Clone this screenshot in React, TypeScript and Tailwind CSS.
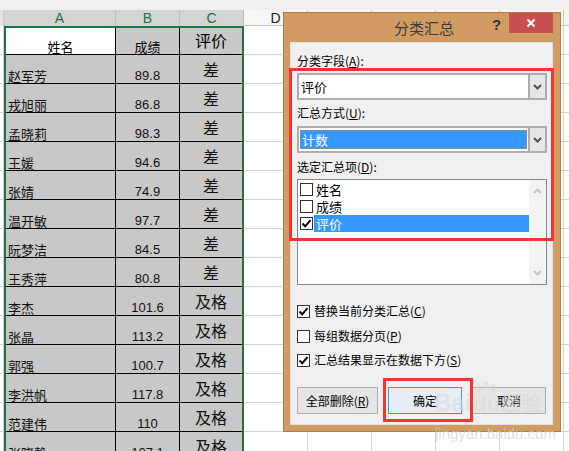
import React from "react";

const data: [string, string, string][] = [
  ["赵军芳", "89.8", "差"],
  ["戎旭丽", "86.8", "差"],
  ["孟晓莉", "98.3", "差"],
  ["王媛", "94.6", "差"],
  ["张婧", "74.9", "差"],
  ["温开敏", "97.7", "差"],
  ["阮梦洁", "84.5", "差"],
  ["王秀萍", "80.8", "差"],
  ["李杰", "101.6", "及格"],
  ["张晶", "113.2", "及格"],
  ["郭强", "100.7", "及格"],
  ["李洪帆", "117.8", "及格"],
  ["范建伟", "110", "及格"],
  ["张晓静", "107.1", "及格"],
];

const rightCols = ["D", "E", "F", "G", "H", "I"];

function CheckMark() {
  return (
    <svg width="11" height="11" viewBox="0 0 11 11" className="block">
      <path d="M1.5 5.5 L4.2 8.3 L9.5 2.2" fill="none" stroke="#000" strokeWidth="2" />
    </svg>
  );
}

function Box({ checked }: { checked?: boolean }) {
  return (
    <div className="w-[13px] h-[13px] border border-[#333] bg-white flex items-center justify-center shrink-0">
      {checked ? <CheckMark /> : null}
    </div>
  );
}

function Chevron({ up, color }: { up?: boolean; color: string }) {
  return (
    <svg width="9" height="6" viewBox="0 0 9 6" className="block">
      <path
        d={up ? "M1 5 L4.5 1.5 L8 5" : "M1 1 L4.5 4.5 L8 1"}
        fill="none"
        stroke={color}
        strokeWidth="2"
      />
    </svg>
  );
}

function DropButton() {
  return (
    <div className="w-[17px] h-full border-l-2 border-[#adadad] bg-[#e6e6e6] flex items-center justify-center">
      <Chevron color="#505050" />
    </div>
  );
}

export default function App() {
  return (
    <div className="relative w-[569px] h-[451px] overflow-hidden bg-white font-['Liberation_Sans','Noto_Sans_CJK_SC',sans-serif]">
      {/* top strip */}
      <div className="h-[10px] bg-[#f0f0f0]" />
      {/* column headers */}
      <div className="flex h-[16px] text-[14px] leading-[16px]">
        <div className="w-[4px] shrink-0 bg-[#e4e4e4] border-r border-[#c8c8c8]" />
        <div className="w-[112px] shrink-0 bg-[#d4d4d4] border-r border-[#bdbdbd] text-center text-[#217346]">A</div>
        <div className="w-[64px] shrink-0 bg-[#d4d4d4] border-r border-[#bdbdbd] text-center text-[#217346]">B</div>
        <div className="w-[64px] shrink-0 bg-[#d4d4d4] border-r border-[#bdbdbd] text-center text-[#217346]">C</div>
        {rightCols.map((c) => (
          <div key={c} className="w-[64px] shrink-0 bg-[#f6f6f6] border-r border-b border-[#c6c6c6] text-center text-[#222]">
            {c}
          </div>
        ))}
      </div>
      {/* body */}
      <div className="flex">
        <div className="w-[4px] shrink-0 flex flex-col">
          {Array.from({ length: 15 }).map((_, i) => (
            <div key={i} className="h-[29px] border-b border-r border-[#d4d4d4] bg-white" />
          ))}
        </div>
        <div className="w-[240px] shrink-0 border-2 border-b-0 border-[#217346] flex flex-col">
          <div className="flex h-[27px] border-b border-black">
            <div className="w-[110px] bg-white border-r border-black flex items-end justify-center text-[13px] leading-[15px] font-['Noto_Sans_CJK_SC',sans-serif]">
              姓名
            </div>
            <div className="w-[64px] bg-[#c8c8c8] border-r border-black flex items-end justify-center text-[13px] leading-[15px] font-['Noto_Sans_CJK_SC',sans-serif]">
              成绩
            </div>
            <div className="w-[62px] bg-[#c8c8c8] flex items-center justify-center text-[16px] leading-[18px] font-['Noto_Sans_CJK_SC',sans-serif] pb-[2px]">
              评价
            </div>
          </div>
          {data.map(([n, s, g]) => (
            <div key={n} className="flex h-[29px] border-b border-black bg-[#c8c8c8]">
              <div className="w-[110px] border-r border-black flex items-end pl-[2px] text-[13px] leading-[15px] font-['Noto_Sans_CJK_SC',sans-serif] text-[#111]">
                {n}
              </div>
              <div className="w-[64px] border-r border-black flex items-end justify-center text-[13px] leading-[15px] font-['Liberation_Sans',sans-serif] text-[#111]">
                {s}
              </div>
              <div className="w-[62px] flex items-center justify-center text-[16px] leading-[18px] font-['Noto_Sans_CJK_SC',sans-serif] text-[#111] pb-[1px]">
                {g}
              </div>
            </div>
          ))}
        </div>
        <div className="flex flex-col">
          {Array.from({ length: 15 }).map((_, i) => (
            <div key={i} className="flex h-[29px]">
              {rightCols.map((c) => (
                <div key={c} className="w-[64px] shrink-0 border-r border-b border-[#d4d4d4]" />
              ))}
            </div>
          ))}
        </div>
      </div>

      {/* dialog window */}
      <div className="absolute left-[283px] top-[12px] w-[278px] h-[420px] bg-[#d19c63] border border-[#b07d48] flex flex-col font-['Noto_Sans_CJK_SC',sans-serif]">
        <div className="h-[29px] shrink-0 flex items-center">
          <div className="w-[208px] pl-[110px] text-[15px] leading-[20px] text-[#3a3a3a] whitespace-nowrap">分类汇总</div>
          <div className="w-[17px] self-start pt-[3px] text-[15px] leading-[18px] font-bold text-[#333] font-['Liberation_Sans',sans-serif]">?</div>
          <div className="self-start w-[44px] h-[20px] bg-[#c75050] flex items-center justify-center">
            <svg width="10" height="10" viewBox="0 0 10 10">
              <path d="M1.5 1.5 L8.5 8.5 M8.5 1.5 L1.5 8.5" stroke="#fff" strokeWidth="2" />
            </svg>
          </div>
        </div>
        <div className="ml-[6px] mr-[7px] h-[383px] bg-[#f0f0f0] border border-[#e2e2e2] px-[6px] flex flex-col text-[12px] text-black">
          <div className="mt-[11px] h-[14px] leading-[14px]">
            分类字段(<span className="underline">A</span>):
          </div>
          <div className="mt-[5px] h-[27px] w-[250px] border-2 border-[#adadad] bg-white flex">
            <div className="flex-1 pl-[2px] flex items-center text-[13px]">评价</div>
            <DropButton />
          </div>
          <div className="mt-[6px] h-[14px] leading-[14px]">
            汇总方式(<span className="underline">U</span>):
          </div>
          <div className="mt-[6px] h-[27px] w-[250px] border-2 border-[#adadad] bg-white flex">
            <div className="flex-1 p-[1px] pt-[2px]">
              <div className="h-[19px] bg-[#3399ff] border border-dotted border-[#c8883c] text-white flex items-center pl-[1px] text-[13px]">
                计数
              </div>
            </div>
            <DropButton />
          </div>
          <div className="mt-[7px] h-[14px] leading-[14px]">
            选定汇总项(<span className="underline">D</span>):
          </div>
          <div className="mt-[5px] h-[106px] w-[250px] border border-[#828790] bg-white flex">
            <div className="flex-1 pt-[1px] pl-[2px] flex flex-col text-[13px]">
              {[
                ["姓名", false],
                ["成绩", false],
                ["评价", true],
              ].map(([t, on]) => (
                <div key={t as string} className="h-[17px] flex items-center">
                  <Box checked={on as boolean} />
                  <div
                    className={
                      "ml-[1px] h-[17px] flex-1 flex items-center pl-[2px] " +
                      (on ? "bg-[#3399ff] text-white" : "")
                    }
                  >
                    {t as string}
                  </div>
                </div>
              ))}
            </div>
            <div className="w-[17px] bg-[#f3f3f3] flex flex-col items-center justify-between py-[8px]">
              <Chevron up color="#c4c4c4" />
              <Chevron color="#c4c4c4" />
            </div>
          </div>
          <div className="mt-[18px] h-[16px] flex items-center gap-[4px]">
            <Box checked />
            <span>
              替换当前分类汇总(<span className="underline">C</span>)
            </span>
          </div>
          <div className="mt-[9px] h-[16px] flex items-center gap-[4px]">
            <Box />
            <span>
              每组数据分页(<span className="underline">P</span>)
            </span>
          </div>
          <div className="mt-[8px] h-[16px] flex items-center gap-[4px]">
            <Box checked />
            <span>
              汇总结果显示在数据下方(<span className="underline">S</span>)
            </span>
          </div>
          <div className="mt-[19px] flex gap-[10px]">
            <div className="w-[81px] h-[27px] border border-[#adadad] bg-[#e5e5e5] flex items-center justify-center">
              全部删除(<span className="underline">R</span>)
            </div>
            <div className="w-[74px] h-[27px] border border-[#3399ff] bg-[#e8eef5] flex items-center justify-center">
              确定
            </div>
            <div className="w-[74px] h-[27px] border border-[#adadad] bg-[#e5e5e5] flex items-center justify-center">
              取消
            </div>
          </div>
        </div>
      </div>

      {/* red highlight boxes */}
      <div className="absolute left-[289px] top-[68px] w-[265px] h-[173px] border-[3px] border-[#f23434]" />
      <div className="absolute left-[383px] top-[378px] w-[90px] h-[44px] border-[3px] border-[#f23434]" />

      {/* watermark */}
      <div className="absolute left-[434px] top-[386px] flex items-end text-[rgba(215,215,215,0.55)] font-bold pointer-events-none">
        <span className="text-[24px] leading-[26px] font-['Liberation_Sans',sans-serif]">Bai</span>
        <div className="relative w-[30px] h-[30px]">
          <svg width="30" height="30" viewBox="0 0 30 30" className="absolute left-0 top-[-6px]">
            <g fill="rgba(215,215,215,0.55)">
              <ellipse cx="8" cy="8" rx="3" ry="4" />
              <ellipse cx="15" cy="5" rx="3" ry="4" />
              <ellipse cx="22" cy="8" rx="3" ry="4" />
            </g>
          </svg>
          <span className="absolute left-[2px] bottom-0 text-[22px] leading-[24px] font-['Liberation_Sans',sans-serif]">du</span>
        </div>
        <span className="text-[20px] leading-[26px] font-['Noto_Sans_CJK_SC',sans-serif]">经验</span>
      </div>
      <div className="absolute left-[435px] top-[425px] text-[15px] leading-[18px] text-[rgba(210,210,210,0.7)] font-['Liberation_Sans',sans-serif] pointer-events-none">
        jingyan.baidu.com
      </div>
    </div>
  );
}
